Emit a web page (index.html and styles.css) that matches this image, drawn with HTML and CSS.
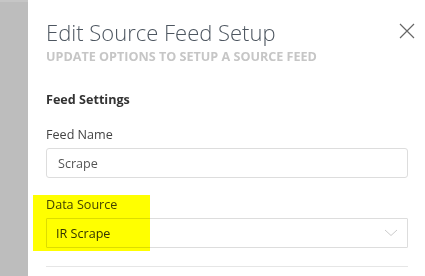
FILE: index.html
```html
<!DOCTYPE html>
<html lang="en">

<head>
    <meta charset="UTF-8">
    <meta name="viewport" content="width=device-width, initial-scale=1.0">
    <title>Edit Source Feed Setup</title>
    <link rel="stylesheet" href="styles.css">
</head>

<body>
    <div class="backdrop"></div>

    <div class="panel">
        <div class="panel-header">
            <div>
                <h1>Edit Source Feed Setup</h1>
                <p class="subtitle">Update options to setup a source feed</p>
            </div>
            <button class="close" aria-label="Close">
                <svg width="16" height="16" viewBox="0 0 16 16">
                    <path d="M1 1 L15 15 M15 1 L1 15" stroke="#666" stroke-width="1.2" fill="none" />
                </svg>
            </button>
        </div>

        <h2>Feed Settings</h2>

        <div class="field">
            <label for="feed-name">Feed Name</label>
            <input type="text" id="feed-name" value="Scrape" />
        </div>

        <div class="field">
            <span class="marker"></span>
            <label for="data-source">Data Source</label>
            <div class="select">
                <span>IR Scrape</span>
                <svg width="14" height="8" viewBox="0 0 14 8">
                    <path d="M1 1 L7 6.5 L13 1" stroke="#ccc" stroke-width="1" fill="none" />
                </svg>
            </div>
        </div>

        <hr>
    </div>
</body>

</html>
```

FILE: styles.css
```css
* {
    box-sizing: border-box;
    margin: 0;
    padding: 0;
}

body {
    font-family: 'Open Sans', sans-serif;
    background-color: #fff;
    display: flex;
    height: 100vh;
    overflow: hidden;
    color: #333;
}

.backdrop {
    width: 28px;
    flex-shrink: 0;
    background-color: #bdbdbd;
    border-top: 2px solid #c6c6c6;
}

.panel {
    flex: 1;
    padding: 17px 17px 0 18px;
}

.panel-header {
    display: flex;
    justify-content: space-between;
    align-items: flex-start;
}

h1 {
    font-size: 22px;
    font-weight: 300;
    color: #4d5660;
    line-height: 30px;
}

.subtitle {
    font-size: 12.6px;
    font-weight: 700;
    text-transform: uppercase;
    color: #c6c6c6;
    margin-top: 2px;
    line-height: 16px;
}

.close {
    background: transparent;
    border: none;
    margin-top: 6px;
    margin-right: -7px;
    cursor: pointer;
}

h2 {
    font-size: 12.6px;
    font-weight: 700;
    color: #333;
    margin-top: 26px;
    line-height: 17px;
}

.field {
    margin-top: 18px;
    position: relative;
}

label {
    display: block;
    font-size: 12.6px;
    color: #444;
    line-height: 17px;
    margin-bottom: 5px;
}

input,
.select {
    width: 100%;
    height: 30px;
    border: 1px solid #ddd;
    border-radius: 3px;
    padding: 0 11px;
    font-family: 'Open Sans', sans-serif;
    font-size: 12.6px;
    color: #555;
    background: transparent;
}

.select {
    display: flex;
    align-items: center;
    justify-content: space-between;
    color: #333;
    padding: 0 9px;
    border-radius: 1px;
}

.marker {
    position: absolute;
    left: -13px;
    top: -1px;
    width: 117px;
    height: 56px;
    background-color: #ffff00;
    mix-blend-mode: multiply;
    pointer-events: none;
}

hr {
    border: none;
    border-top: 1px solid #e6e6e6;
    margin-top: 18px;
}
```
